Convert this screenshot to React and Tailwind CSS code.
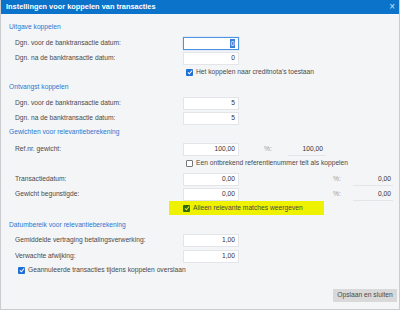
import React from "react";

const Field = ({ value, focused }) => (
  <div
    className={
      "w-[56px] h-[13px] bg-white flex items-center justify-end pr-[3px] text-[#333] border " +
      (focused ? "border-[#4d93e0] shadow-[0_0_1px_#7fb3ea]" : "border-[#e3e5e8]")
    }
  >
    {focused ? <span className="bg-[#3b7fd9] text-white leading-[9px] px-[0.5px]">{value}</span> : value}
  </div>
);

const Display = ({ value, width }) => (
  <div className={"h-[13px] flex items-center justify-end border-b border-[#e3e5e8] text-[#333] " + width}>
    {value}
  </div>
);

const CheckIcon = ({ box = "bg-[#1f6fd6]", tick = "#ffffff" }) => (
  <span className={"w-[7px] h-[7px] rounded-[1px] flex items-center justify-center shrink-0 " + box}>
    <svg width="6" height="6" viewBox="0 0 10 10">
      <path d="M1.5 5.5 L4 8 L8.5 2.5" fill="none" stroke={tick} strokeWidth="1.8" />
    </svg>
  </span>
);

const EmptyBox = () => (
  <span className="w-[7px] h-[7px] rounded-[1px] border border-[#777] bg-white shrink-0" />
);

const Heading = ({ children, className = "" }) => (
  <div className={"h-[12px] flex items-center pl-[8px] text-[#2a78cf] " + className}>{children}</div>
);

const Row = ({ label, value, focused, className = "", children }) => (
  <div className={"h-[13px] flex items-center " + className}>
    <div className="w-[182px] pl-[14px] text-[#4a4a4a]">{label}</div>
    <Field value={value} focused={focused} />
    {children}
  </div>
);

const CheckRow = ({ label, checked = true, left = 182, className = "" }) => (
  <div className={"h-[10px] flex items-center gap-[3px] text-[#4a4a4a] " + className}>
    <div className={left === 182 ? "w-[182px] shrink-0" : "w-[14px] shrink-0"} />
    {checked ? <CheckIcon /> : <EmptyBox />}
    <span>{label}</span>
  </div>
);

export default function App() {
  return (
    <div className="w-[400px] h-[311px] bg-white font-['Liberation_Sans',Arial,sans-serif] text-[6.7px] leading-none">
      <div className="w-[400px] h-[310px] flex flex-col bg-[#f4f5f7] border-x border-b border-[#c9cbce]">
        <div className="h-[14px] shrink-0 bg-[#0b73c9] flex items-center justify-between pl-[5px] pr-[4px]">
          <span className="text-white font-bold text-[7.4px]">Instellingen voor koppelen van transacties</span>
          <span className="text-[#cfe2f5] text-[10px] leading-none">×</span>
        </div>

        <div className="flex flex-col pt-[7px] flex-1">
          <Heading>Uitgave koppelen</Heading>
          <Row className="mt-[4px]" label="Dgn. voor de banktransactie datum:" value="0" focused />
          <Row className="mt-[2px]" label="Dgn. na de banktransactie datum:" value="0" />
          <CheckRow className="mt-[2px]" label="Het koppelen naar creditnota's toestaan" />

          <Heading className="mt-[4px]">Ontvangst koppelen</Heading>
          <Row className="mt-[4px]" label="Dgn. voor de banktransactie datum:" value="5" />
          <Row className="mt-[2px]" label="Dgn. na de banktransactie datum:" value="5" />

          <Heading className="mt-[1px]">Gewichten voor relevantieberekening</Heading>
          <Row className="mt-[5px]" label="Ref.nr. gewicht:" value="100,00">
            <span className="ml-[25px] w-[24px] text-[#9a9a9a]">%:</span>
            <Display value="100,00" width="w-[38px] pr-[3px]" />
          </Row>
          <CheckRow className="mt-[2px]" checked={false} label="Een ontbrekend referentienummer telt als koppelen" />
          <Row className="mt-[5px]" label="Transactiedatum:" value="0,00">
            <span className="ml-[94px] w-[20px] text-[#9a9a9a]">%:</span>
            <Display value="0,00" width="w-[40px] pr-[2px]" />
          </Row>
          <Row className="mt-[2px]" label="Gewicht begunstigde:" value="0,00">
            <span className="ml-[94px] w-[20px] text-[#9a9a9a]">%:</span>
            <Display value="0,00" width="w-[40px] pr-[2px]" />
          </Row>

          <div className="h-[14px] flex items-center">
            <div className="w-[168px] shrink-0" />
            <div className="w-[155px] h-[14px] bg-[#eef200] flex items-center gap-[3px] pl-[14px] text-[#4a4a40]">
              <CheckIcon box="bg-[#2d6a10]" tick="#e8f000" />
              <span>Alleen relevante matches weergeven</span>
            </div>
          </div>

          <Heading className="mt-[4px]">Datumbereik voor relevantieberekening</Heading>
          <Row className="mt-[3px]" label="Gemiddelde vertraging betalingsverwerking:" value="1,00" />
          <Row className="mt-[3px]" label="Verwachte afwijking:" value="1,00" />
          <CheckRow className="mt-[2px]" left={14} label="Geannuleerde transacties tijdens koppelen overslaan" />

          <div className="flex justify-end pr-[2px] mt-[14px]">
            <button className="w-[64px] h-[13px] bg-[#d9d9d9] text-[#4a4a4a] flex items-center justify-center">
              Opslaan en sluiten
            </button>
          </div>
        </div>
      </div>
    </div>
  );
}
